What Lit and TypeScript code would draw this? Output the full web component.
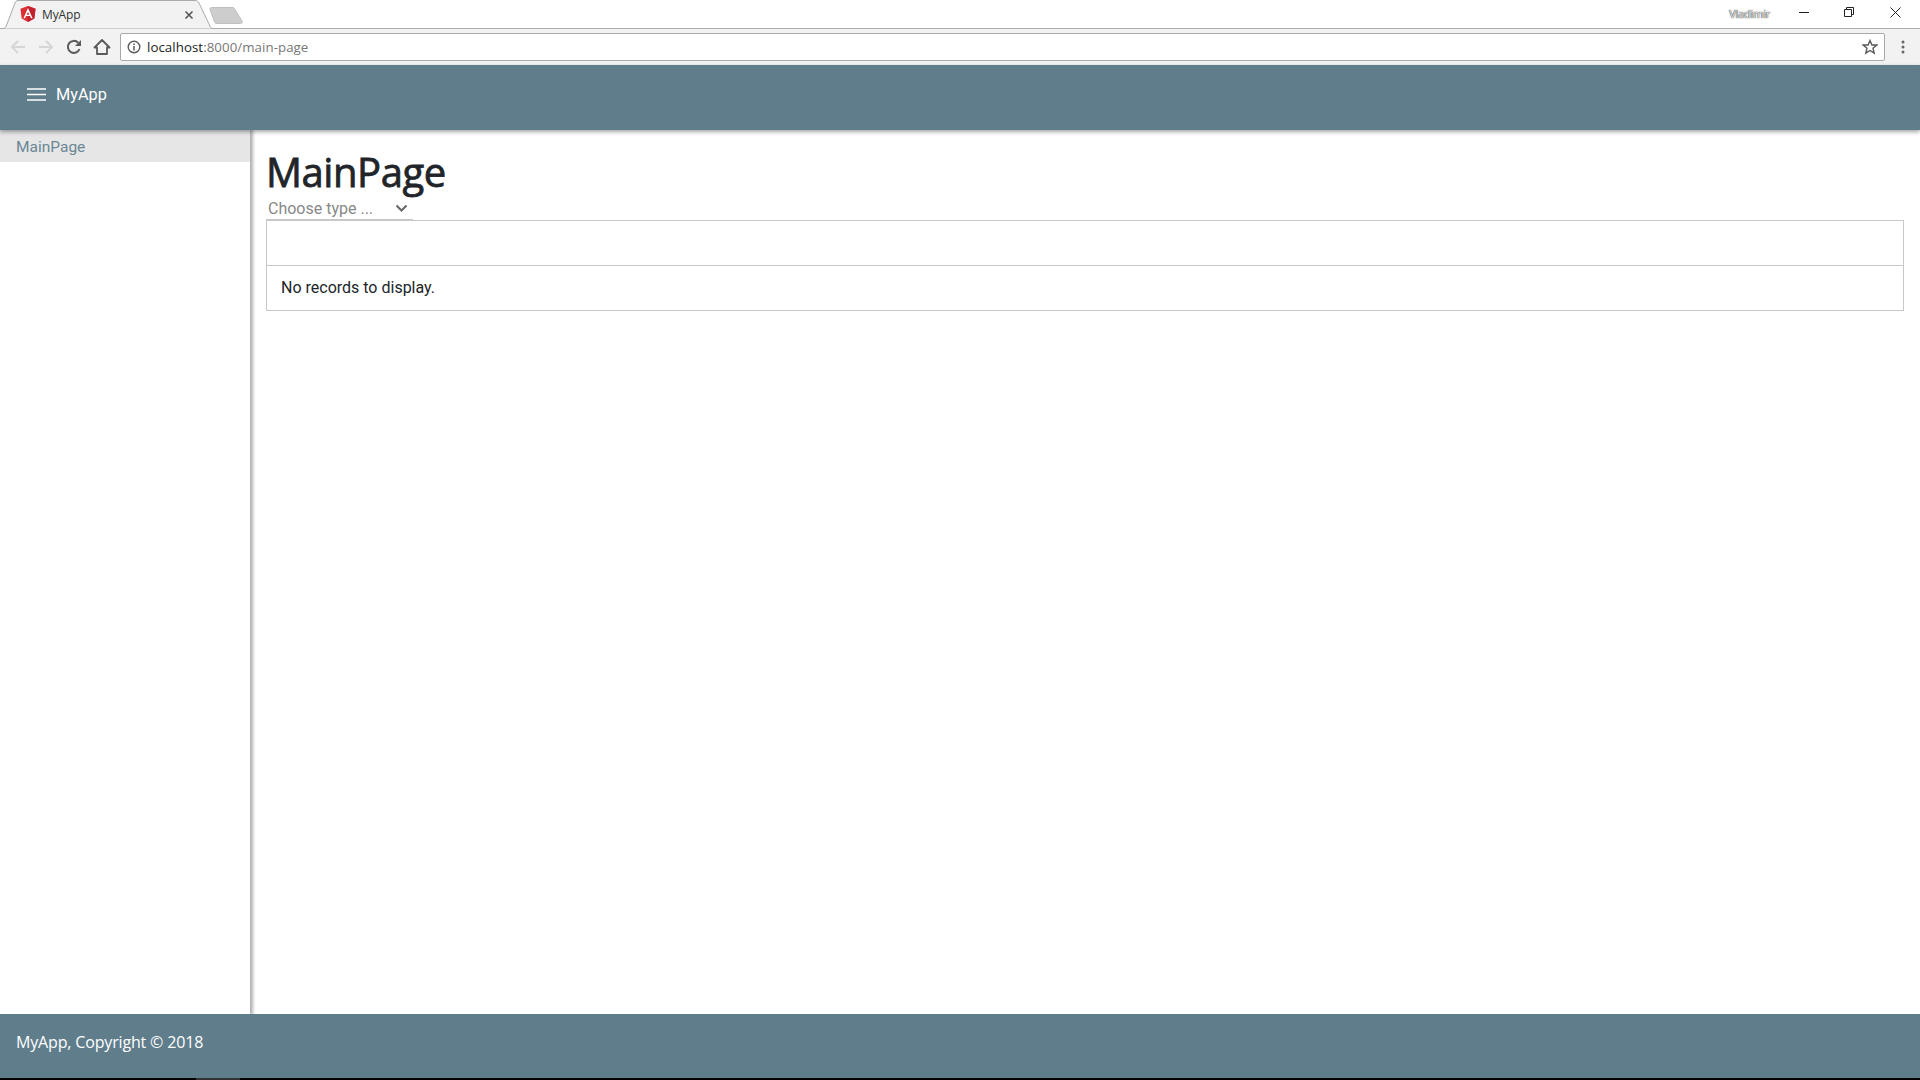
import { LitElement, html, css } from "lit";
import { customElement } from "lit/decorators.js";

@customElement("app-root")
export class AppRoot extends LitElement {
  static styles = css`
    :host { display: flex; flex-direction: column; width: 1920px; height: 1080px; overflow: hidden; background: #fff; font-family: Roboto, sans-serif; }
    .tabstrip { height: 29px; flex: none; display: flex; align-items: flex-start; position: relative; background: #fff; border-bottom: 1px solid #aaa; box-sizing: border-box; }
    .tabshape { position: absolute; left: 0; top: 0; }
    .tabcontent { position: relative; display: flex; align-items: center; height: 29px; width: 200px; padding: 0 0 0 20px; box-sizing: border-box; font: 12px "Open Sans", sans-serif; color: #333; }
    .favicon { margin-right: 6px; margin-top: -1px; }
    .tabtitle { width: 142px; letter-spacing: -0.1px; }
    .tabclose { margin-top: 1px; }
    .newtab { position: relative; margin: 7px 0 0 9px; }
    .spacer { flex: 1; }
    .user { position: relative; font: 11px "Open Sans", sans-serif; color: #f0f0f0; text-shadow: 0 0 1px #222, 0 0 1px #222; margin: 6px 11px 0 0; letter-spacing: -0.2px; }
    .winbtn { position: relative; width: 45px; height: 28px; display: flex; align-items: center; justify-content: center; margin-top: -2px; }
    .winbtn.close { width: 47px; padding-left: 1px; box-sizing: border-box; }
    .winbtns { display: flex; margin-right: 2px; }
    .toolbar { height: 36px; flex: none; background: #f2f2f2; display: flex; align-items: center; padding: 0 0 0 4px; box-sizing: border-box; }
    .navicon { width: 28px; height: 28px; display: flex; align-items: center; justify-content: center; }
    .omnibox { flex: 1; height: 28px; box-sizing: border-box; margin: 0 6px 0 4px; background: #fff; border: 1px solid #a9a9a9; border-radius: 2px; display: flex; align-items: center; padding: 0 6px 0 6px; font: 13.3px "Open Sans", sans-serif; color: #777; }
    .url-host { color: #222; }
    .url { margin-left: 6px; flex: 1; letter-spacing: 0.05px; }
    .kebab { width: 23px; display: flex; justify-content: center; margin-right: 6px; }
    .appbar { height: 65px; flex: none; background: #607d8b; color: #fff; display: flex; align-items: flex-start; position: relative; z-index: 2; box-shadow: 0 2px 4px rgba(0,0,0,.35); padding: 20px 0 0 27px; box-sizing: border-box; font: 16.3px Roboto, sans-serif; }
    .appname { margin-left: 10px; line-height: 19px; }
    .burger { margin-top: 3px; display: block; }
    .middle { flex: 1; display: flex; min-height: 0; }
    .sidebar { width: 250px; flex: none; box-shadow: 2px 0 3px 1px rgba(0,0,0,.3); position: relative; z-index: 1; background: #fff; }
    .navitem { height: 32px; background: #e6e6e6; padding: 1px 0 0 16px; box-sizing: border-box; color: #6b8795; font: 15.5px/32px Roboto, sans-serif; }
    .content { flex: 1; padding: 18px 16px 0 16px; min-width: 0; }
    h1 { margin: 0; font: 400 40px/48px "Open Sans", sans-serif; color: #212529; letter-spacing: -0.45px; -webkit-text-stroke: 0.8px #212529; }
    .select { width: 147px; height: 18px; margin-top: 6px; border-bottom: 1px solid #c8c8c8; display: flex; align-items: center; justify-content: space-between; box-sizing: border-box; padding: 0 5px 4px 2px; color: #888; font: 16px Roboto, sans-serif; }
    .table { border: 1px solid #c8c8c8; }
    .thead { height: 44px; border-bottom: 1px solid #c8c8c8; }
    .tbody { height: 44px; display: flex; align-items: center; box-sizing: border-box; padding: 0 0 1px 14px; font: 16px Roboto, sans-serif; color: #212529; }
    .footer { height: 64px; flex: none; background: #607d8b; color: #fff; display: flex; align-items: flex-start; padding: 18px 0 0 16px; box-sizing: border-box; position: relative; z-index: 2; font: 16px/21px "Open Sans", sans-serif; letter-spacing: -0.16px; }
    .taskbar { height: 2px; flex: none; background: #000; padding-left: 196px; }
    .taskbar div { width: 44px; height: 2px; background: #333; }
  `;

  render() {
    return html`
      <div class="tabstrip">
        <svg class="tabshape" width="260" height="29" viewBox="0 0 260 29">
          <path d="M0 28.5H3C5 28.5 6 27 7 24L15 3C15.600 1.500 16.500 .5 18 .5H195C197 .5 198 1.500 199 3L209 24C210 27 211 28.500 213 28.500" fill="#f2f2f2" stroke="#aaa" />
        </svg>
        <div class="tabcontent">
          <svg class="favicon" width="16" height="16" viewBox="0 0 16 16">
            <path d="M8 0L.5 2.700 1.700 12.500 8 16l6.300-3.500L15.500 2.700Z" fill="#dd2c32" />
            <path d="M8 0v16l6.300-3.500L15.500 2.700Z" fill="#c3202f" />
            <path d="M8 2L3.400 12.300H5.100L6 10H10L10.900 12.300H12.600ZM8 5.900L9.300 8.700H6.700Z" fill="#fff" />
          </svg>
          <span class="tabtitle">MyApp</span>
          <svg class="tabclose" width="10" height="10" viewBox="0 0 10 10"><path d="M1.500 1.500L8.500 8.500M8.500 1.500L1.500 8.500" stroke="#555" stroke-width="1.600" /></svg>
        </div>
        <svg class="newtab" width="36" height="18" viewBox="0 0 36 18"><path d="M1 2.500C.5 1.300 1 .5 2.500 .5H23C24.500 .5 25.500 1 26 2.500L33 14C33.700 15.500 33 16.500 31.500 16.500H8C6.500 16.500 6 16 5.500 15Z" fill="#cdcdcd" stroke="#c0c0c0" /></svg>
        <div class="spacer"></div>
        <span class="user">Vladimir</span>
        <div class="winbtns">
          <div class="winbtn"><svg width="10" height="10" viewBox="0 0 10 10"><path d="M0 5.500H10" stroke="#222" /></svg></div>
          <div class="winbtn"><svg width="10" height="10" viewBox="0 0 10 10"><path d="M.5 2.500H7.500V9.500H.5ZM2.500 2.500V.5H9.500V7.500H7.500" fill="none" stroke="#222" /></svg></div>
          <div class="winbtn close"><svg width="11" height="11" viewBox="0 0 11 11"><path d="M.5 .5L10.500 10.500M10.500 .5L.5 10.500" stroke="#222" /></svg></div>
        </div>
      </div>
      <div class="toolbar">
        <div class="navicon"><svg width="16" height="16" viewBox="0 0 16 16"><path d="M15 8H2M8 2L2 8l6 6" fill="none" stroke="#d6d6d6" stroke-width="2" /></svg></div>
        <div class="navicon"><svg width="16" height="16" viewBox="0 0 16 16"><path d="M1 8H14M8 2l6 6-6 6" fill="none" stroke="#d6d6d6" stroke-width="2" /></svg></div>
        <div class="navicon"><svg width="16" height="16" viewBox="0 0 16 16"><path d="M13.500 10A6 6 0 1 1 12.200 3.700" fill="none" stroke="#5a5a5a" stroke-width="2" /><path d="M15 1V7H9Z" fill="#5a5a5a" /></svg></div>
        <div class="navicon"><svg width="18" height="18" viewBox="0 0 18 18"><path d="M1.500 9.500L9 2 16.500 9.500H14V16H4V9.500Z" fill="none" stroke="#5a5a5a" stroke-width="1.800" stroke-linejoin="round" /></svg></div>
        <div class="omnibox">
          <svg width="14" height="14" viewBox="0 0 14 14"><circle cx="7" cy="7" r="5.800" fill="none" stroke="#5a5a5a" stroke-width="1.400" /><path d="M7 6V10.500M7 3.500V5" stroke="#5a5a5a" stroke-width="1.500" /></svg>
          <span class="url"><span class="url-host">localhost</span>:8000/main-page</span>
          <svg width="16" height="16" viewBox="0 0 16 16"><path d="M8 1.500L9.900 6H14.800L11 9.200 12.200 14.200 8 11.500 3.800 14.200 5 9.200 1.200 6H6.100Z" fill="none" stroke="#5a5a5a" stroke-width="1.400" /></svg>
        </div>
        <div class="kebab"><svg width="4" height="14" viewBox="0 0 4 14"><circle cx="2" cy="2" r="1.500" fill="#666" /><circle cx="2" cy="7" r="1.500" fill="#666" /><circle cx="2" cy="12" r="1.500" fill="#666" /></svg></div>
      </div>
      <div class="appbar">
        <svg class="burger" width="19" height="13" viewBox="0 0 19 13"><path d="M0 1H19M0 6.500H19M0 12H19" stroke="#fff" stroke-width="1.700" /></svg>
        <span class="appname">MyApp</span>
      </div>
      <div class="middle">
        <nav class="sidebar"><div class="navitem">MainPage</div></nav>
        <main class="content">
          <h1>MainPage</h1>
          <div class="select">
            <span>Choose type ...</span>
            <svg width="13" height="9" viewBox="0 0 13 9"><path d="M1.500 1.500L6.500 6.500 11.500 1.500" fill="none" stroke="#666" stroke-width="2" /></svg>
          </div>
          <div class="table">
            <div class="thead"></div>
            <div class="tbody">No records to display.</div>
          </div>
        </main>
      </div>
      <footer class="footer">MyApp, Copyright © 2018</footer>
      <div class="taskbar"><div></div></div>
    `;
  }
}
